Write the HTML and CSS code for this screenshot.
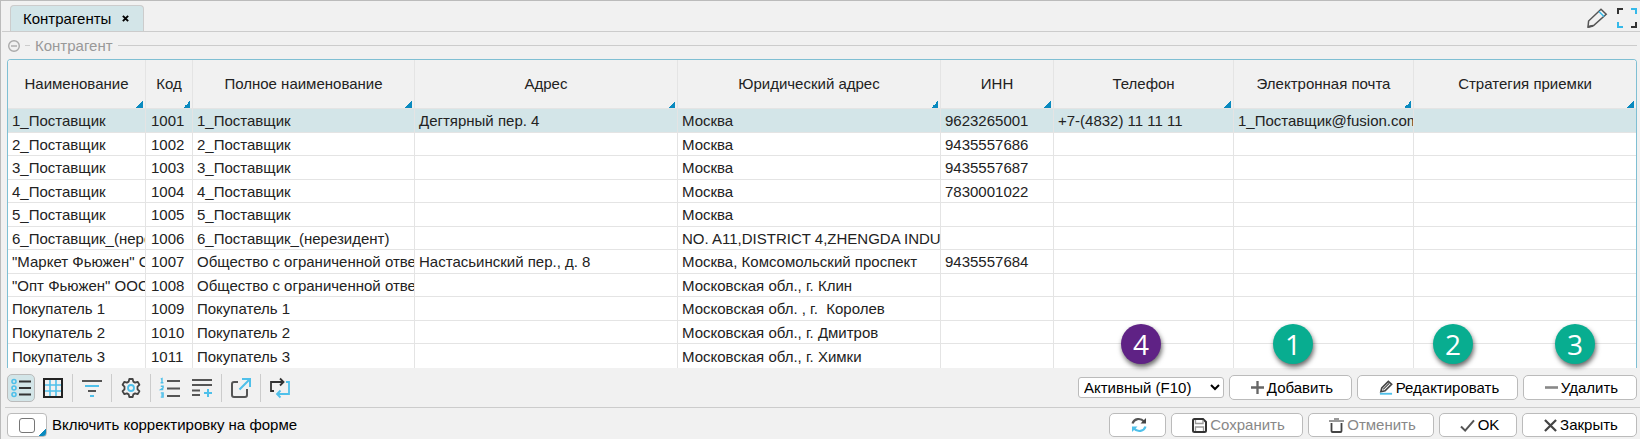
FILE: index.html
```html
<!DOCTYPE html>
<html lang="ru">
<head>
<meta charset="utf-8">
<title>Контрагенты</title>
<link rel="stylesheet" href="styles.css">
</head>
<body>
<div class="window">
  <header class="tabs">
    <div class="tab"><span>Контрагенты</span><button class="tab-close" aria-label="Закрыть вкладку"><svg width="7" height="7" viewBox="0 0 8 8"><path d="M1 1l6 6M7 1L1 7" stroke="#000" stroke-width="2.200"/></svg></button></div>
    <div class="tab-tools">
      <button class="bare" aria-label="Настроить"><svg width="20" height="20" viewBox="0 0 20 20" fill="none" stroke="#555" stroke-width="1.500"><path d="M1 19l.6-6L14 1.200l5.200 5L6.600 17.600z"/><path d="M1 19l5-1.200" stroke-width="2"/><path d="M12 3.500l5 5" stroke="#35b9e9"/></svg></button>
      <button class="bare" aria-label="Развернуть"><svg width="20" height="20" viewBox="0 0 20 20" fill="none" stroke-width="2"><path d="M1 6V1h5M19 14v5h-5" stroke="#333"/><path d="M14 1h5v5M1 14v5h5" stroke="#35b9e9"/></svg></button>
    </div>
  </header>

  <main class="content">
    <div class="group-title">
      <button class="bare collapse" aria-label="Свернуть"><svg width="12" height="12" viewBox="0 0 12 12" fill="none" stroke="#aaa" stroke-width="1.400"><circle cx="6" cy="6" r="5.300"/><path d="M3 6h6"/></svg></button>
      <span class="dash"></span>
      <span>Контрагент</span>
      <span class="rule"></span>
    </div>

    <div class="grid">
      <table>
        <colgroup><col class="c-name"><col class="c-code"><col class="c-full"><col class="c-addr"><col class="c-addr"><col class="c-inn"><col class="c-contact"><col class="c-contact"><col></colgroup>
        <thead><tr><th>Наименование</th><th>Код</th><th>Полное наименование</th><th>Адрес</th><th>Юридический адрес</th><th>ИНН</th><th>Телефон</th><th>Электронная почта</th><th>Стратегия приемки</th></tr></thead>
        <tbody>
          <tr class="selected"><td>1_Поставщик</td><td>1001</td><td>1_Поставщик</td><td>Дегтярный пер. 4</td><td>Москва</td><td>9623265001</td><td>+7-(4832) 11 11 11</td><td>1_Поставщик@fusion.com</td><td></td></tr>
          <tr><td>2_Поставщик</td><td>1002</td><td>2_Поставщик</td><td></td><td>Москва</td><td>9435557686</td><td></td><td></td><td></td></tr>
          <tr><td>3_Поставщик</td><td>1003</td><td>3_Поставщик</td><td></td><td>Москва</td><td>9435557687</td><td></td><td></td><td></td></tr>
          <tr><td>4_Поставщик</td><td>1004</td><td>4_Поставщик</td><td></td><td>Москва</td><td>7830001022</td><td></td><td></td><td></td></tr>
          <tr><td>5_Поставщик</td><td>1005</td><td>5_Поставщик</td><td></td><td>Москва</td><td></td><td></td><td></td><td></td></tr>
          <tr><td>6_Поставщик_(нерезидент)</td><td>1006</td><td>6_Поставщик_(нерезидент)</td><td></td><td>NO. A11,DISTRICT 4,ZHENGDA INDUSTRIAL</td><td></td><td></td><td></td><td></td></tr>
          <tr><td>"Маркет Фьюжен" ООО</td><td>1007</td><td>Общество с ограниченной ответственностью</td><td>Настасьинский пер., д. 8</td><td>Москва, Комсомольский проспект</td><td>9435557684</td><td></td><td></td><td></td></tr>
          <tr><td>"Опт Фьюжен" ООО</td><td>1008</td><td>Общество с ограниченной ответственностью</td><td></td><td>Московская обл., г. Клин</td><td></td><td></td><td></td><td></td></tr>
          <tr><td>Покупатель 1</td><td>1009</td><td>Покупатель 1</td><td></td><td>Московская обл. , г.  Королев</td><td></td><td></td><td></td><td></td></tr>
          <tr><td>Покупатель 2</td><td>1010</td><td>Покупатель 2</td><td></td><td>Московская обл., г. Дмитров</td><td></td><td></td><td></td><td></td></tr>
          <tr><td>Покупатель 3</td><td>1011</td><td>Покупатель 3</td><td></td><td>Московская обл., г. Химки</td><td></td><td></td><td></td><td></td></tr>
        </tbody>
      </table>
    </div>

    <div class="toolbar">
      <div class="icons">
        <button class="icon active" aria-label="Список"><svg width="20" height="20" viewBox="0 0 20 20" fill="none"><g stroke="#4fc0ea" stroke-width="1.600"><circle cx="3" cy="3.500" r="2"/><circle cx="3" cy="10" r="2"/><circle cx="3" cy="16.500" r="2"/></g><path d="M8 3.500h12M8 10h12M8 16.500h12" stroke="#333" stroke-width="2"/></svg></button>
        <button class="icon" aria-label="Таблица"><svg width="20" height="20" viewBox="0 0 20 20" fill="none"><path d="M7 1v18M13 1v18M1 7h18M1 13h18" stroke="#4fc0ea" stroke-width="1.600"/><path d="M1 1h18v18H1z" stroke="#222" stroke-width="2"/></svg></button>
        <span class="sep"></span>
        <button class="icon" aria-label="Фильтр"><svg width="20" height="20" viewBox="0 0 20 20" fill="none" stroke-width="2"><path d="M0 3h20M6 13h8" stroke="#555"/><path d="M3 8h14M8 18h4" stroke="#4fc0ea"/></svg></button>
        <span class="sep"></span>
        <button class="icon" aria-label="Настройки"><svg width="20" height="20" viewBox="0 0 20 20" fill="none"><path d="M8.300 1h3.400l.6 2.600 1.800 1 2.500-.8 1.800 3-1.900 1.900v2.600l1.900 1.900-1.800 3-2.500-.8-1.800 1-.6 2.600H8.300l-.6-2.600-1.800-1-2.500.8-1.800-3 1.900-1.900V8.700L1.600 6.800l1.800-3 2.500.8 1.800-1z" stroke="#444" stroke-width="1.800" stroke-linejoin="round"/><circle cx="10" cy="10" r="3" stroke="#4fc0ea" stroke-width="1.800"/></svg></button>
        <span class="sep"></span>
        <button class="icon" aria-label="Нумерация"><svg width="20" height="20" viewBox="0 0 20 20" fill="none"><path d="M7 3h13M7 10.500h13M7 18h13" stroke="#555" stroke-width="2"/><path d="M.8 1.200L2 .6v4.200M.6 4.800h2.800M.8 8.200h2.300v1.600L.8 11.600h2.500M.8 15h2.300v4H.8M1.200 17h2" stroke="#4fc0ea" stroke-width="1.400"/></svg></button>
        <button class="icon" aria-label="Добавить строку"><svg width="20" height="20" viewBox="0 0 20 20" fill="none"><path d="M0 2h20M0 7h20M0 12.500h8M0 17h8" stroke="#555" stroke-width="2"/><path d="M16 11v8M12 15h8" stroke="#4fc0ea" stroke-width="2"/></svg></button>
        <span class="sep"></span>
        <button class="icon" aria-label="Экспорт"><svg width="20" height="20" viewBox="0 0 20 20" fill="none"><path d="M7 4H3a2 2 0 0 0-2 2v11a2 2 0 0 0 2 2h11a2 2 0 0 0 2-2v-6" stroke="#555" stroke-width="2"/><path d="M8.500 11.500L19 1M11 1h8v8" stroke="#4fc0ea" stroke-width="2"/></svg></button>
        <span class="sep"></span>
        <button class="icon" aria-label="Обновить вид"><svg width="20" height="20" viewBox="0 0 20 20" fill="none" stroke-width="1.800"><path d="M4 13H1V4h12M10 .5L13.500 4 10 7.500" stroke="#333"/><path d="M16 4h3v12H7M10.500 12.500L7 16l3.500 3.500" stroke="#4fc0ea"/></svg></button>
      </div>
      <div class="actions">
        <div class="field"><select class="filter" aria-label="Фильтр"><option>Активный (F10)</option></select><span class="badge badge-filter">4</span></div>
        <div class="field"><button class="btn add"><svg width="13" height="13" viewBox="0 0 14 14"><path d="M7 0v14M0 7h14" stroke="#666" stroke-width="2.500"/></svg>Добавить</button><span class="badge badge-add">1</span></div>
        <div class="field"><button class="btn edit"><svg width="14" height="15" viewBox="0 0 15 15" fill="none"><path d="M2 12l1-4L10 1l3.500 3L6.500 11z" stroke="#444" stroke-width="1.800"/><path d="M4.500 9.500L11 3" stroke="#555" stroke-width="1.400"/><path d="M1 14.200h13" stroke="#4fc0ea" stroke-width="2"/></svg>Редактировать</button><span class="badge badge-edit">2</span></div>
        <div class="field"><button class="btn remove"><svg width="13" height="13" viewBox="0 0 14 14"><path d="M0 7h14" stroke="#888" stroke-width="2.800"/></svg>Удалить</button><span class="badge badge-remove">3</span></div>
      </div>
    </div>
  </main>

  <footer class="footer">
    <label class="correction"><span class="check-box"><input type="checkbox"></span>Включить корректировку на форме</label>
    <div class="actions">
      <button class="btn refresh" aria-label="Обновить"><svg width="16" height="16" viewBox="0 0 16 16" fill="none" stroke-width="2.200"><path d="M1.500 6.500C3 1.500 9.500.5 13 4.500" stroke="#555"/><path d="M15 1v5.500H9.500z" fill="#444"/><path d="M14.500 9.500C13 14.500 6.500 15.500 3 11.500" stroke="#4fc0ea"/><path d="M1 15V9.500h5.500z" fill="#4fc0ea"/></svg></button>
      <button class="btn save" disabled><svg width="15" height="15" viewBox="0 0 15 15" fill="none"><path d="M1 2.500Q1 1 2.500 1H11l3 3v8.500q0 1.500-1.500 1.500h-10Q1 14 1 12.500z" stroke="#333" stroke-width="2"/><path d="M3.500 2v3.500h7.500V2M3.500 13V9h8v4" stroke="#999" stroke-width="1.300"/></svg>Сохранить</button>
      <button class="btn cancel" disabled><svg width="15" height="15" viewBox="0 0 15 15" fill="none"><path d="M2.500 5v8q0 1 1 1h8q1 0 1-1V5" stroke="#444" stroke-width="1.800"/><path d="M0 3h15M5 1h5" stroke="#999" stroke-width="1.800"/></svg>Отменить</button>
      <button class="btn ok"><svg width="15" height="13" viewBox="0 0 16 14" fill="none"><path d="M1 8l4.500 4.500L15 1.500" stroke="#555" stroke-width="2.200"/></svg>OK</button>
      <button class="btn close"><svg width="13" height="13" viewBox="0 0 14 14"><path d="M1 1l12 12M13 1L1 13" stroke="#444" stroke-width="2.400"/></svg>Закрыть</button>
    </div>
  </footer>
</div>
</body>
</html>
```

FILE: styles.css
```css
* { box-sizing: border-box; }

body {
  margin: 0;
  background: #f1f1f1;
  color: #000;
  font: 15px/18px "Liberation Sans", Arial, sans-serif;
}

button, select, input { font: inherit; color: inherit; }
button { display: flex; align-items: center; justify-content: center; padding: 0; }
svg { display: block; flex: none; overflow: visible; }

.window {
  min-height: 100vh;
  border-top: 1px solid #bbb;
  border-left: 1px solid #bbb;
}

.tabs {
  display: flex;
  justify-content: space-between;
  align-items: flex-end;
  margin-left: 1px;
  padding: 4px 3px 0 8px;
  border-bottom: 1px solid #ccc;
}

.tab {
  display: flex;
  align-items: center;
  gap: 11px;
  height: 26px;
  padding: 0 14px 0 12px;
  background: #d3e5e8;
  border: 1px solid #ccc;
  border-bottom: 0;
  border-radius: 4px 4px 0 0;
}

.tab-close, .bare { background: none; border: 0; }
.tab-tools { display: flex; gap: 10px; padding-bottom: 3px; }

.content { padding: 0 3px 0 6px; }

.group-title {
  display: flex;
  align-items: center;
  gap: 5px;
  height: 27px;
  padding-left: 1px;
  color: #999;
}
.dash { width: 5px; height: 1px; background: #ccc; }
.rule { flex: 1; height: 1px; background: #ccc; }

.grid {
  border: 1px solid #7fbfd3;
  border-bottom: 0;
  border-radius: 4px 4px 0 0;
  overflow: hidden;
}

table {
  width: 100%;
  table-layout: fixed;
  border-collapse: separate;
  border-spacing: 0;
  background: #fff;
  color: #222;
}
.c-name { width: 138px; }
.c-code { width: 47px; }
.c-full { width: 222px; }
.c-addr { width: 263px; }
.c-inn { width: 113px; }
.c-contact { width: 180px; }

th, td {
  border-right: 1px solid #e4e4e4;
  border-bottom: 1px solid #e4e4e4;
  overflow: hidden;
  white-space: pre;
}
th:last-child, td:last-child { border-right: 0; }

th {
  height: 49px;
  padding: 0;
  font-weight: normal;
  background: linear-gradient(135deg, transparent 50%, #0a8abf 50%) right 2px bottom / 7px 7px no-repeat #f1f1f1;
}
td { height: 24px; padding: 1px 0 0 4px; }
tr:nth-child(even) td { height: 23px; }
td:nth-child(2) { padding-left: 5px; }
tr:last-child td { border-bottom: 0; }
.selected td { background: #d3e5e8; }

.toolbar {
  display: flex;
  justify-content: space-between;
  align-items: center;
  height: 39px;
}
.icons { display: flex; align-items: center; gap: 4px; }
.icon {
  width: 28px;
  height: 28px;
  background: none;
  border: 1px solid transparent;
  border-radius: 5px;
}
.icon.active { background: #d3e5e8; border-color: #bbb; }
.sep { width: 1px; height: 28px; margin: 0 1px; background: #ccc; }

.actions { display: flex; align-items: center; gap: 5px; }
.field { position: relative; }

.btn {
  gap: 3px;
  height: 25px;
  padding-left: 3px;
  background: #fff;
  border: 1px solid #bbb;
  border-radius: 5px;
}
.btn:disabled { color: #888; }
.filter {
  display: block;
  width: 146px;
  height: 21px;
  padding: 0 0 0 1px;
  background: #fff;
  border: 1px solid #bbb;
  border-radius: 3px;
}
.add { width: 123px; }
.edit { width: 161px; }
.remove { width: 114px; }

.badge {
  position: absolute;
  bottom: 36px;
  width: 40px;
  height: 40px;
  border-radius: 50%;
  background: #08ad90;
  box-shadow: 1px 3px 5px rgba(0, 0, 0, 0.6);
  color: #fff;
  font-family: "Open Sans", "Noto Sans", sans-serif;
  font-size: 28px;
  font-weight: 500;
  line-height: 40px;
  text-align: center;
}
.badge-filter { left: 43px; bottom: 34px; background: #5f2285; }
.badge-add { left: 44px; }
.badge-edit { left: 76px; }
.badge-remove { left: 32px; }

.footer {
  display: flex;
  justify-content: space-between;
  align-items: center;
  height: 35px;
  margin-left: 4px;
  padding: 0 3px 0 2px;
  border-top: 1px solid #ccc;
}
.correction { display: flex; align-items: center; gap: 5px; }
.check-box {
  display: flex;
  align-items: center;
  justify-content: center;
  width: 40px;
  height: 24px;
  border: 1px solid #bbb;
  border-radius: 4px;
  background: linear-gradient(135deg, transparent 50%, #0a8abf 50%) right bottom / 7px 7px no-repeat #fff;
}
.check-box input {
  appearance: none;
  width: 16px;
  height: 15px;
  margin: 0;
  border: 1px solid #767676;
  border-radius: 3px;
  background: #fff;
}
.check-box input:checked { background: #0a8abf; }

.footer .btn { height: 24px; }
.refresh { width: 57px; }
.save { width: 132px; }
.cancel { width: 126px; }
.ok { width: 78px; }
.close { width: 115px; }
```
